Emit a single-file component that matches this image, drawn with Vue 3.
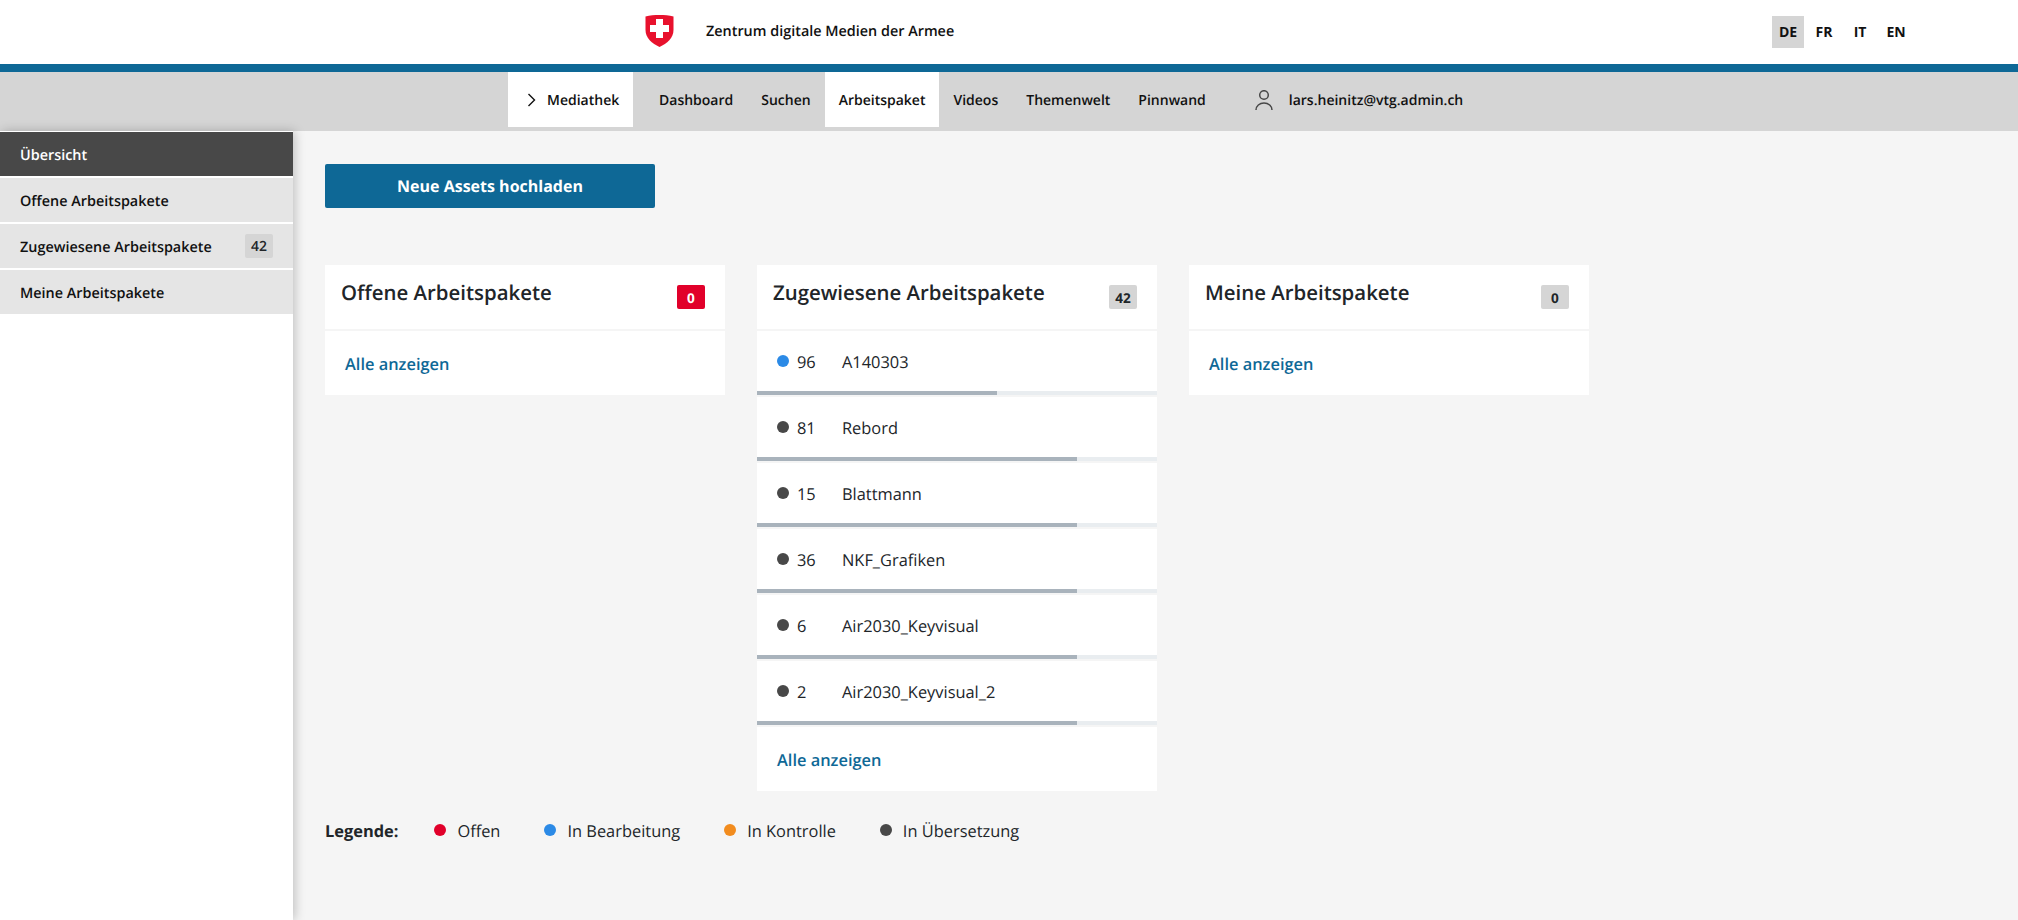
<script setup>
const navItems = [
  { label: 'Dashboard', active: false },
  { label: 'Suchen', active: false },
  { label: 'Arbeitspaket', active: true },
  { label: 'Videos', active: false },
  { label: 'Themenwelt', active: false },
  { label: 'Pinnwand', active: false }
]
const langs = ['DE', 'FR', 'IT', 'EN']
const sideItems = [
  { label: 'Übersicht', active: true },
  { label: 'Offene Arbeitspakete' },
  { label: 'Zugewiesene Arbeitspakete', badge: 42 },
  { label: 'Meine Arbeitspakete' }
]
const rows = [
  { num: 96, name: 'A140303', color: '#2b8ae6', pct: 60 },
  { num: 81, name: 'Rebord', color: '#484848', pct: 80 },
  { num: 15, name: 'Blattmann', color: '#484848', pct: 80 },
  { num: 36, name: 'NKF_Grafiken', color: '#484848', pct: 80 },
  { num: 6, name: 'Air2030_Keyvisual', color: '#484848', pct: 80 },
  { num: 2, name: 'Air2030_Keyvisual_2', color: '#484848', pct: 80 }
]
const cards = [
  { title: 'Offene Arbeitspakete', count: 0, alert: true, rows: [] },
  { title: 'Zugewiesene Arbeitspakete', count: 42, alert: false, rows },
  { title: 'Meine Arbeitspakete', count: 0, alert: false, rows: [] }
]
const legend = [
  { label: 'Offen', color: '#e1002a' },
  { label: 'In Bearbeitung', color: '#2b8ae6' },
  { label: 'In Kontrolle', color: '#f28c1e' },
  { label: 'In Übersetzung', color: '#484848' }
]
</script>

<template>
  <div class="page">
    <header class="top">
      <svg class="logo" viewBox="0 0 29 32" width="29" height="32" aria-hidden="true">
        <path d="M0.5 1.600C5 0.400 9.500 0 14.500 0S24 0.400 28.500 1.600V15C28.500 23 22 28.500 14.500 32C7 28.500 0.500 23 0.500 15Z" fill="#e8112d" />
        <path d="M11 4h7v6h6v7h-6v6h-7v-6H5v-7h6Z" fill="#fff" />
      </svg>
      <span class="org">Zentrum digitale Medien der Armee</span>
      <div class="langs">
        <span v-for="(l, i) in langs" :key="l" class="lang" :class="{ 'lang-on': i === 0 }">{{ l }}</span>
      </div>
    </header>

    <nav class="nav">
      <div class="nav-home">
        <svg class="chev" viewBox="0 0 9 14" width="9" height="14" aria-hidden="true">
          <path d="M1.500 1L7.500 7L1.500 13" fill="none" stroke="#111" stroke-width="1.400" />
        </svg>
        <span>Mediathek</span>
      </div>
      <a v-for="n in navItems" :key="n.label" class="nav-item" :class="{ 'nav-on': n.active }">{{ n.label }}</a>
      <div class="user">
        <svg viewBox="0 0 18 20" width="18" height="20" aria-hidden="true">
          <circle cx="9" cy="5" r="4.300" fill="none" stroke="#484848" stroke-width="1.500" />
          <path d="M1 20C1 16 4.500 13 9 13S17 16 17 20" fill="none" stroke="#484848" stroke-width="1.500" />
        </svg>
        <span>lars.heinitz@vtg.admin.ch</span>
      </div>
    </nav>

    <div class="body">
      <aside class="side">
        <a v-for="s in sideItems" :key="s.label" class="side-item" :class="{ 'side-on': s.active }">
          <span>{{ s.label }}</span>
          <span v-if="s.badge" class="badge side-badge">{{ s.badge }}</span>
        </a>
      </aside>

      <main class="main">
        <button class="upload">Neue Assets hochladen</button>

        <section class="cards">
          <article v-for="c in cards" :key="c.title" class="card">
            <div class="card-head">
              <h2 class="card-title">{{ c.title }}</h2>
              <span class="badge head-badge" :class="{ 'badge-alert': c.alert }">{{ c.count }}</span>
            </div>
            <div v-for="r in c.rows" :key="r.name" class="row">
              <div class="row-body">
                <span class="dot" :style="{ background: r.color }"></span>
                <span class="num">{{ r.num }}</span>
                <span>{{ r.name }}</span>
              </div>
              <div class="track"><div class="fill" :style="{ width: r.pct + '%' }"></div></div>
            </div>
            <div class="card-foot"><a class="more">Alle anzeigen</a></div>
          </article>
        </section>

        <div class="legend">
          <strong class="legend-title">Legende:</strong>
          <span v-for="l in legend" :key="l.label" class="legend-item">
            <span class="dot" :style="{ background: l.color }"></span>
            <span>{{ l.label }}</span>
          </span>
        </div>
      </main>
    </div>
  </div>
</template>

<style scoped>
.page {
  width: 2018px;
  height: 920px;
  overflow: hidden;
  display: flex;
  flex-direction: column;
  background: #f5f5f5;
  font-family: "Open Sans", "Noto Sans", sans-serif;
  color: #212529;
  font-size: 16.4px;
  text-rendering: geometricPrecision;
}
.top {
  height: 64px;
  flex: none;
  display: flex;
  align-items: center;
  background: #fff;
  padding-left: 645px;
  padding-right: 106px;
  border-bottom: 8px solid #0e6896;
  box-sizing: content-box;
}
.logo {
  flex: none;
  margin-bottom: 2px;
}
.org {
  margin-left: 32px;
  margin-bottom: 2px;
  font-size: 14.4px;
  font-weight: 600;
  color: #111;
}
.langs {
  margin-left: auto;
  display: flex;
  gap: 4px;
}
.lang {
  width: 32px;
  height: 32px;
  box-sizing: border-box;
  padding-top: 1px;
  display: flex;
  align-items: center;
  justify-content: center;
  font-size: 14px;
  font-weight: 700;
  color: #111;
}
.lang-on { background: #d5d5d5; }
.nav {
  height: 59px;
  flex: none;
  display: flex;
  align-items: flex-start;
  background: #d5d5d5;
  padding-left: 508px;
  font-size: 14px;
  font-weight: 600;
  color: #111;
}
.nav-home {
  height: 55px;
  width: 125px;
  box-sizing: border-box;
  background: #fff;
  display: flex;
  align-items: center;
  gap: 11px;
  padding-left: 19px;
  padding-top: 1px;
  margin-right: 12px;
}
.chev { flex: none; }
.nav-item {
  height: 55px;
  box-sizing: border-box;
  padding: 2px 14px 0;
  display: flex;
  align-items: center;
}
.nav-on { background: #fff; }
.user {
  height: 55px;
  box-sizing: border-box;
  padding-top: 1px;
  display: flex;
  align-items: center;
  gap: 16px;
  margin-left: 35px;
  font-weight: 600;
}
.body {
  flex: 1;
  display: flex;
  min-height: 0;
}
.side {
  width: 293px;
  flex: none;
  box-sizing: border-box;
  padding-top: 1px;
  background: #fff;
  box-shadow: 2px 0 10px rgba(0, 0, 0, 0.22);
  display: flex;
  flex-direction: column;
  gap: 2px;
  font-size: 14.4px;
  font-weight: 600;
  color: #111;
  position: relative;
}
.side-item {
  height: 44px;
  box-sizing: border-box;
  display: flex;
  align-items: center;
  justify-content: space-between;
  padding: 2px 20px 0;
  background: #e5e5e5;
}
.side-on {
  background: #484848;
  color: #fff;
}
.badge {
  width: 28px;
  height: 24px;
  display: flex;
  align-items: center;
  justify-content: center;
  border-radius: 2px;
  background: #d5d5d5;
  font-size: 14px;
  font-weight: 600;
  color: #212529;
}
.side-badge { margin-top: -2px; }
.main {
  flex: 1;
  padding: 33px 32px 0;
}
.upload {
  display: block;
  width: 330px;
  height: 44px;
  border: 0;
  border-radius: 2px;
  background: #0e6896;
  color: #fff;
  font-family: inherit;
  font-size: 16px;
  font-weight: 700;
  text-rendering: geometricPrecision;
}
.cards {
  display: flex;
  align-items: flex-start;
  gap: 32px;
  margin-top: 57px;
}
.card {
  width: 400px;
  display: flex;
  flex-direction: column;
  gap: 2px;
}
.card-head {
  height: 64px;
  background: #fff;
  display: flex;
  align-items: flex-start;
  justify-content: space-between;
  padding: 0 20px 0 16px;
}
.card-title {
  margin: 13px 0 0;
  font-size: 20.4px;
  line-height: 28px;
  font-weight: 600;
}
.head-badge {
  margin-top: 20px;
  font-weight: 700;
  font-size: 13.6px;
}
.badge-alert {
  background: #e1002a;
  color: #fff;
}
.row {
  height: 64px;
  display: flex;
  flex-direction: column;
  background: #fff;
}
.row-body {
  flex: 1;
  display: flex;
  align-items: center;
  padding-left: 20px;
}
.dot {
  width: 12px;
  height: 12px;
  flex: none;
  border-radius: 50%;
}
.num {
  width: 45px;
  margin-left: 8px;
}
.track {
  height: 4px;
  background: #e9edf0;
}
.fill {
  height: 100%;
  background: #a9b3bc;
}
.card-foot {
  height: 64px;
  background: #fff;
  display: flex;
  align-items: center;
  padding-left: 20px;
}
.more {
  color: #0e6896;
  font-weight: 600;
}
.legend {
  display: flex;
  align-items: center;
  margin-top: 27px;
  height: 24px;
}
.legend-title {
  font-weight: 700;
  margin-right: 36px;
}
.legend-item {
  display: flex;
  align-items: center;
  gap: 11px;
  margin-right: 44px;
}
</style>
